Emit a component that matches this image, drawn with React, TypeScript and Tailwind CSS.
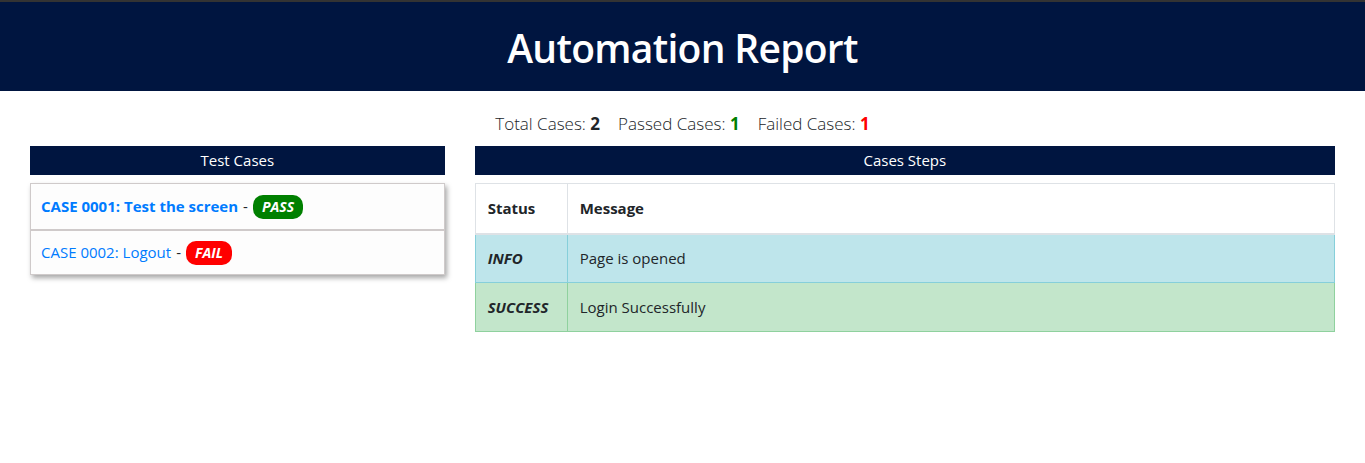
const cases = [
  { id: "CASE 0001", name: "Test the screen", status: "PASS", active: true },
  { id: "CASE 0002", name: "Logout", status: "FAIL", active: false },
];

const steps = [
  { status: "INFO", message: "Page is opened", row: "bg-[#bee5eb]", border: "border-[#86cfda]" },
  { status: "SUCCESS", message: "Login Successfully", row: "bg-[#c3e6cb]", border: "border-[#8fd19e]" },
];

export default function App() {
  return (
    <div className="min-h-screen bg-white text-[#212529] font-['Open_Sans',sans-serif]">
      <div className="h-[2px] bg-[#333333]" />
      {/* Header */}
      <div className="h-[89px] bg-[#001540] flex items-center justify-center pt-[4px]">
        <h1 className="text-[39px] font-semibold text-white tracking-[-0.7px]">Automation Report</h1>
      </div>

      {/* Summary */}
      <div className="text-center text-[17px] font-light pt-[20px] h-[55px]">
        Total Cases: <b className="font-bold">2</b>
        <span className="ml-[18px]">Passed Cases: </span>
        <b className="font-bold text-[#008000]">1</b>
        <span className="ml-[18px]">Failed Cases: </span>
        <b className="font-bold text-[#ff0000]">1</b>
      </div>

      <div className="flex px-[30px] gap-[30px]">
        {/* Test cases */}
        <div className="w-[415px]">
          <div className="h-[29px] bg-[#001540] text-white text-[15px] flex items-center justify-center">
            Test Cases
          </div>
          <div className="mt-[8px] border border-[#cfcaca] shadow-[2px_3px_5px_rgba(0,0,0,0.35)]">
            {cases.map((c, i) => (
              <div
                key={c.id}
                className={`h-[45px] px-[10px] flex items-center bg-[#fdfdfd] text-[15px] ${
                  i > 0 ? "border-t-2 border-[#cfcaca]" : ""
                }`}
              >
                <span className={`text-[#007bff] ${c.active ? "font-bold" : ""}`}>
                  {c.id}: {c.name}
                </span>
                <span className="mx-[5px]">-</span>
                <span
                  className={`px-[9px] h-[24px] flex items-center rounded-[10px] text-white italic font-bold text-[14px] ${
                    c.status === "PASS" ? "bg-[#008000]" : "bg-[#ff0000]"
                  }`}
                >
                  {c.status}
                </span>
              </div>
            ))}
          </div>
        </div>

        {/* Case steps */}
        <div className="w-[861px]">
          <div className="h-[29px] bg-[#001540] text-white text-[15px] flex items-center justify-center">
            Cases Steps
          </div>
          <table className="mt-[8px] w-full border-collapse text-[15px]">
            <thead>
              <tr className="h-[50px]">
                <th className="w-[92px] text-left font-bold px-[12px] border border-[#dee2e6] border-b-2">Status</th>
                <th className="text-left font-bold px-[12px] border border-[#dee2e6] border-b-2">Message</th>
              </tr>
            </thead>
            <tbody>
              {steps.map((s) => (
                <tr key={s.status} className={`h-[49px] ${s.row}`}>
                  <td className={`px-[12px] border ${s.border} font-bold italic`}>{s.status}</td>
                  <td className={`px-[12px] border ${s.border}`}>{s.message}</td>
                </tr>
              ))}
            </tbody>
          </table>
        </div>
      </div>
    </div>
  );
}
